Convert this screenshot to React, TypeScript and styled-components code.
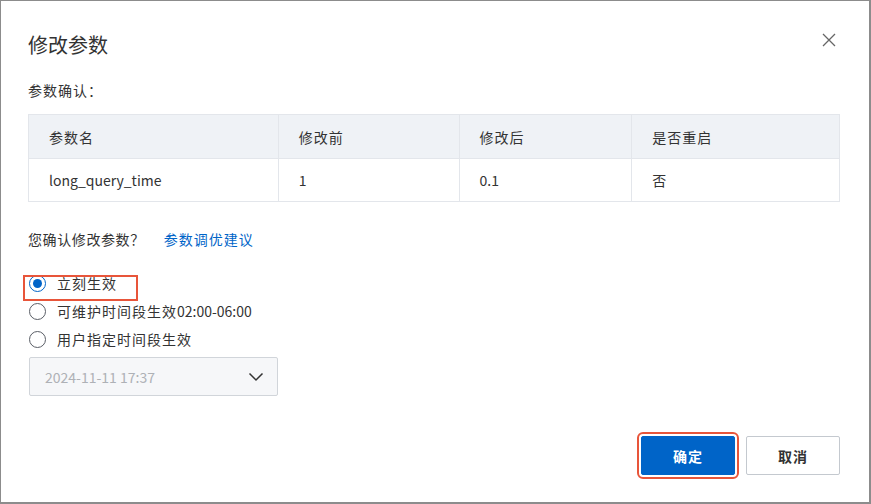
import React from "react";
import styled, { createGlobalStyle } from "styled-components";

const Global = createGlobalStyle`
  html, body { margin: 0; padding: 0; background: #fff; }
  body { font-family: "Noto Sans CJK SC", "Noto Sans", sans-serif; color: #333; }
  * { box-sizing: border-box; }
`;

const Dialog = styled.div`
  position: relative;
  width: 871px;
  height: 504px;
  border: 1px solid #8c8c8c;
  border-right-width: 2px;
  border-bottom-width: 2px;
  background: #fff;
  padding: 30px 29px 27px 27px;
  display: flex;
  flex-direction: column;
`;

const Title = styled.h2`
  margin: 0;
  font-size: 20px;
  line-height: 28px;
  font-weight: 400;
  color: #333;
`;

const CloseBtn = styled.button`
  position: absolute;
  top: 31px;
  right: 32px;
  width: 16px;
  height: 16px;
  padding: 0;
  border: 0;
  background: transparent;
  display: flex;
  align-items: center;
  justify-content: center;
`;

const Label = styled.div`
  margin-top: 21px;
  font-size: 14px;
  line-height: 20px;
  letter-spacing: 1px;
  color: #333;
`;

const Table = styled.table`
  margin-top: 14px;
  width: 812px;
  border-collapse: collapse;
  font-size: 14px;
  color: #333;
`;

const Th = styled.th<{ $w: number }>`
  width: ${(p) => p.$w}px;
  height: 44px;
  background: #eff2f6;
  border: 1px solid #e3e6eb;
  text-align: left;
  font-weight: 400;
  letter-spacing: 1px;
  padding: 0 20px;
`;

const Td = styled.td`
  height: 43px;
  border: 1px solid #e3e6eb;
  padding: 0 20px;
`;

const ConfirmLine = styled.div`
  margin-top: 27px;
  display: flex;
  gap: 19px;
  font-size: 14px;
  line-height: 20px;
  letter-spacing: 0.6px;
`;

const Link = styled.a`
  color: #0064c8;
  text-decoration: none;
  letter-spacing: 1px;
`;

const RadioGroup = styled.div`
  margin-top: 20px;
  display: flex;
  flex-direction: column;
`;

const RadioRow = styled.label<{ $highlight?: boolean }>`
  position: relative;
  display: flex;
  align-items: center;
  gap: 11px;
  height: 28px;
  font-size: 14px;
  letter-spacing: 1px;
  color: #333;
  ${(p) =>
    p.$highlight &&
    `
    &::after {
      content: "";
      position: absolute;
      left: -5px;
      top: 6px;
      width: 111px;
      height: 22px;
      border: 2px solid #e8553a;
      pointer-events: none;
    }
  `}
`;

const Num = styled.span`
  letter-spacing: 0;
`;

const Circle = styled.span<{ $checked?: boolean }>`
  width: 17px;
  height: 17px;
  border-radius: 50%;
  border: 1px solid ${(p) => (p.$checked ? "#0064c8" : "#5a5e66")};
  display: flex;
  align-items: center;
  justify-content: center;
  flex: none;
  margin-left: 1px;
  &::after {
    content: "";
    width: 9px;
    height: 9px;
    border-radius: 50%;
    background: ${(p) => (p.$checked ? "#0064c8" : "transparent")};
  }
`;

const Select = styled.div`
  margin-top: 4px;
  margin-left: 1px;
  width: 249px;
  height: 39px;
  border: 1px solid #d1d5da;
  border-radius: 2px;
  background: #f6f7f9;
  display: flex;
  align-items: center;
  justify-content: space-between;
  padding: 0 13px 0 15px;
  font-size: 14px;
  color: #aeb1b6;
`;

const Footer = styled.div`
  margin-top: auto;
  display: flex;
  justify-content: flex-end;
  gap: 11px;
`;

const Button = styled.button<{ $primary?: boolean }>`
  width: 94px;
  height: 39px;
  border-radius: 2px;
  font-family: inherit;
  font-size: 14px;
  font-weight: 700;
  letter-spacing: 1px;
  cursor: pointer;
  border: 1px solid ${(p) => (p.$primary ? "#0064c8" : "#c4c9cf")};
  background: ${(p) => (p.$primary ? "#0064c8" : "#fff")};
  color: ${(p) => (p.$primary ? "#fff" : "#333")};
  ${(p) => p.$primary && `outline: 2px solid #e8553a; outline-offset: 2px;`}
`;

const cols = [
  { name: "参数名", w: 250 },
  { name: "修改前", w: 181 },
  { name: "修改后", w: 173 },
  { name: "是否重启", w: 208 },
];

export default function App() {
  return (
    <>
      <Global />
      <Dialog>
        <Title>修改参数</Title>
        <CloseBtn aria-label="close">
          <svg width="14" height="14" viewBox="0 0 14 14">
            <path d="M1 1 L13 13 M13 1 L1 13" stroke="#666" strokeWidth="1.3" fill="none" />
          </svg>
        </CloseBtn>
        <Label>参数确认：</Label>
        <Table>
          <thead>
            <tr>
              {cols.map((c) => (
                <Th key={c.name} $w={c.w}>
                  {c.name}
                </Th>
              ))}
            </tr>
          </thead>
          <tbody>
            <tr>
              <Td>long_query_time</Td>
              <Td>1</Td>
              <Td>0.1</Td>
              <Td>否</Td>
            </tr>
          </tbody>
        </Table>
        <ConfirmLine>
          <span>您确认修改参数？</span>
          <Link href="#">参数调优建议</Link>
        </ConfirmLine>
        <RadioGroup>
          <RadioRow $highlight>
            <Circle $checked />
            立刻生效
          </RadioRow>
          <RadioRow>
            <Circle />
            <span>
              可维护时间段生效<Num>02:00-06:00</Num>
            </span>
          </RadioRow>
          <RadioRow>
            <Circle />
            用户指定时间段生效
          </RadioRow>
        </RadioGroup>
        <Select>
          <span>2024-11-11 17:37</span>
          <svg width="16" height="10" viewBox="0 0 16 10">
            <path d="M1.5 1.5 L8 8 L14.5 1.5" stroke="#333" strokeWidth="1.5" fill="none" />
          </svg>
        </Select>
        <Footer>
          <Button $primary>确定</Button>
          <Button>取消</Button>
        </Footer>
      </Dialog>
    </>
  );
}
